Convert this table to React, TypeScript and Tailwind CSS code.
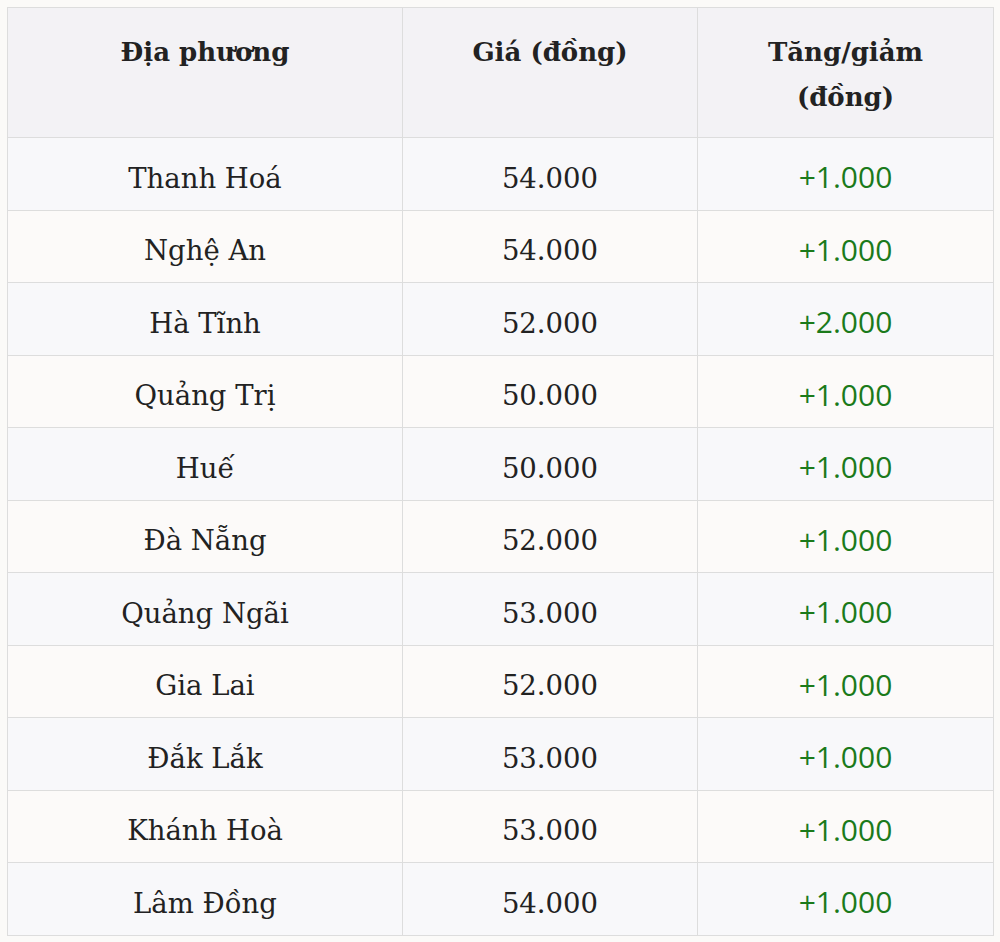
const rows = [
  { place: "Thanh Hoá", price: "54.000", change: "+1.000" },
  { place: "Nghệ An", price: "54.000", change: "+1.000" },
  { place: "Hà Tĩnh", price: "52.000", change: "+2.000" },
  { place: "Quảng Trị", price: "50.000", change: "+1.000" },
  { place: "Huế", price: "50.000", change: "+1.000" },
  { place: "Đà Nẵng", price: "52.000", change: "+1.000" },
  { place: "Quảng Ngãi", price: "53.000", change: "+1.000" },
  { place: "Gia Lai", price: "52.000", change: "+1.000" },
  { place: "Đắk Lắk", price: "53.000", change: "+1.000" },
  { place: "Khánh Hoà", price: "53.000", change: "+1.000" },
  { place: "Lâm Đồng", price: "54.000", change: "+1.000" },
];

export default function App() {
  return (
    <div className="min-h-screen bg-[#fbfaf8] p-[7px] font-['DejaVu_Serif',serif] text-[#222]">
      <table className="w-[986px] table-fixed border-collapse border border-[#dddddd]">
        <colgroup>
          <col className="w-[395px]" />
          <col className="w-[295px]" />
          <col className="w-[296px]" />
        </colgroup>
        <thead>
          <tr className="h-[130px] bg-[#f3f2f5]">
            <th className="border border-[#dddddd] px-4 pt-[22px] align-top text-[26px] leading-[45px] font-bold">
              Địa phương
            </th>
            <th className="border border-[#dddddd] px-4 pt-[22px] align-top text-[26px] leading-[45px] font-bold">
              Giá (đồng)
            </th>
            <th className="border border-[#dddddd] px-4 pt-[22px] align-top text-[26px] leading-[45px] font-bold">
              Tăng/giảm
              <br />
              (đồng)
            </th>
          </tr>
        </thead>
        <tbody>
          {rows.map((r, i) => (
            <tr
              key={r.place}
              className={i % 2 === 0 ? "h-[72.5px] bg-[#f8f8fa]" : "h-[72.5px] bg-[#fcfaf9]"}
            >
              <td className="border border-[#dddddd] px-4 pt-[9px] text-center text-[27.5px]">
                {r.place}
              </td>
              <td className="border border-[#dddddd] px-4 pt-[9px] text-center text-[27.5px]">
                {r.price}
              </td>
              <td className="border border-[#dddddd] px-4 pt-[6px] text-center font-['Open_Sans',sans-serif] text-[30px] text-[#1b7a1b]">
                {r.change}
              </td>
            </tr>
          ))}
        </tbody>
      </table>
    </div>
  );
}
